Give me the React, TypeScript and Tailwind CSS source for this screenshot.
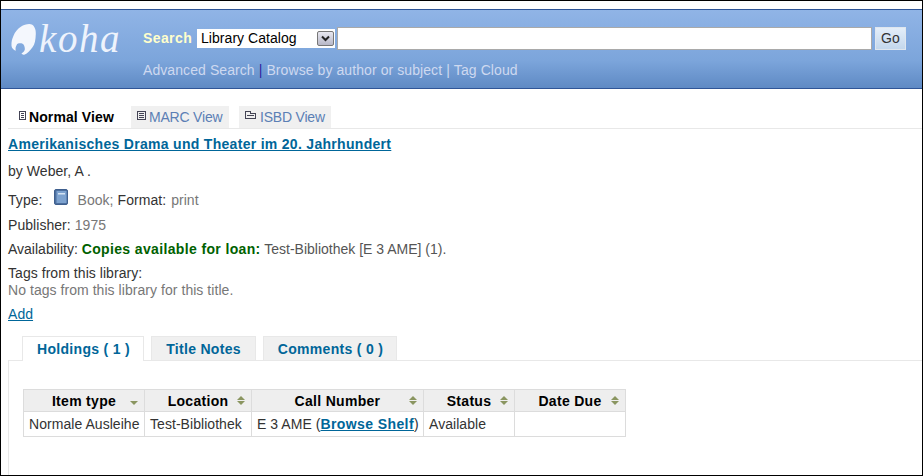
const sans = 'font-["Liberation_Sans",Arial,sans-serif]';

function SortIcon({ up = true }: { up?: boolean }) {
  return (
    <svg width="8" height="9" viewBox="0 0 8 9" className="shrink-0">
      {up && <path d="M4 0 L8 4 L0 4 Z" fill="#8a9560" />}
      <path d="M0 5 L8 5 L4 9 Z" fill="#8a9560" />
    </svg>
  );
}

function ViewIcon({ kind }: { kind: 'normal' | 'marc' | 'isbd' }) {
  return (
    <svg width="11" height="9" viewBox="0 0 11 9" className="shrink-0 mb-[8px]" fill="none" stroke="#445" strokeWidth="1" shapeRendering="crispEdges">
      {kind === 'normal' && (
        <>
          <rect x="0.5" y="0.5" width="6" height="8" />
          <path d="M2 2.5H5M2 4.5H5M2 6.5H5" />
        </>
      )}
      {kind === 'marc' && (
        <>
          <rect x="0.5" y="0.5" width="8" height="8" />
          <path d="M2 2.5H7M2 4.5H7M2 6.5H7" />
        </>
      )}
      {kind === 'isbd' && (
        <>
          <path d="M0.5 7.5V0.5H5.5V2.5H10.5V7.5Z" />
          <path d="M2 4.5H9" />
        </>
      )}
    </svg>
  );
}

function BookIcon() {
  return (
    <svg width="14" height="16" viewBox="0 0 14 16" className="shrink-0">
      <rect x="0.5" y="0.5" width="13" height="15" rx="1.5" fill="#4d6f9e" stroke="#3f5f8e" />
      <rect x="2.5" y="2" width="10" height="12" fill="#7da2cf" />
      <rect x="4" y="4" width="7" height="1.5" fill="#d5e3f3" />
    </svg>
  );
}

function Logo() {
  return (
    <div className="flex items-start w-[134px] pl-[10px] pt-[14px] shrink-0">
      <svg width="26" height="31" viewBox="0 0 25 31" className="shrink-0">
        <path
          d="M17.7 0 C22.5 0 24.6 5 24.3 10 C24 16 23.5 20 21 23.3 C18.5 27 15.5 30 12.7 30.7 C11.5 31 10.4 30.4 10 29.3 C12 28.5 13.8 26.5 13.3 24 C12.9 21 11.5 19.5 10 19.3 C7.5 19 5.3 19.5 5.3 20.7 C4 22.5 3.8 25 4.3 26.7 C2 26 0.2 24 0 21.7 C-0.2 18 0.5 15 2 11.7 C3.5 8 6 5 9.3 2.7 C12 1 15 0 17.7 0 Z"
          fill="#f4f7fd"
        />
      </svg>
      <span className='text-[#eef3fc] italic font-normal text-[39px] leading-[37px] font-["Liberation_Serif",serif] tracking-[1.6px] ml-[2px] -mt-[4px]'>
        koha
      </span>
    </div>
  );
}

const columns = [
  { label: 'Item type', width: 'w-[121px]', up: false },
  { label: 'Location', width: 'w-[107px]', up: true },
  { label: 'Call Number', width: 'w-[172px]', up: true },
  { label: 'Status', width: 'w-[91px]', up: true },
  { label: 'Date Due', width: 'w-[111px]', up: true },
];

export default function App() {
  return (
    <div className={`${sans} w-[923px] h-[476px] bg-white border border-black overflow-hidden text-[14px] text-[#333] tracking-[0.05px]`}>
      <div className="mt-2 h-20 border-y border-[#2f5597] bg-gradient-to-b from-[#90b4e6] via-[#7ca5db] via-65% to-[#5f8ac4] flex">
        <Logo />
        <div className="flex-1 pl-[8px] pt-[16px] pr-[16px]">
          <div className="flex items-center h-6">
            <span className="text-[#ffffcc] font-bold text-[14px] tracking-[0.4px] w-[54px]">Search</span>
            <div className="w-[138px] h-[19px] bg-white flex items-center justify-between pl-1 pr-[1px] text-[14px] text-black border-y border-white">
              <span>Library Catalog</span>
              <span className="w-[17px] h-[15px] bg-gradient-to-b from-[#e8e8f0] to-[#b8b8c8] border border-[#777] rounded-[2px] flex items-center justify-center">
                <svg width="9" height="7" viewBox="0 0 9 7">
                  <path d="M1 1.5 L4.5 5 L8 1.5" fill="none" stroke="#222" strokeWidth="2" />
                </svg>
              </span>
            </div>
            <div className="flex-1 h-[23px] bg-white border border-[#a9a9a9] ml-[2px]" />
            <button className="w-[31px] h-[23px] ml-[3px] border border-[#dfe6ee] bg-gradient-to-b from-[#e4eef9] to-[#c3d7ec] text-[#333] text-[14px] leading-none">
              Go
            </button>
          </div>
          <div className="mt-[10px] text-[14px] text-[#ced9f0] flex items-center h-[20px] tracking-[0.08px]">
            <span>Advanced Search</span>
            <span className="text-[#2f1f9f] px-[4px]">|</span>
            <span>Browse by author or subject</span>
            <span className="text-[#ced9f0] px-[4px]">|</span>
            <span>Tag Cloud</span>
          </div>
        </div>
      </div>

      <div className="mt-4 ml-[7px] flex items-end border-b border-[#e8e8e8] h-[24px]">
        <div className="flex items-end ml-[11px] h-[22px] w-[112px] text-black">
          <ViewIcon kind="normal" />
          <span className="font-bold tracking-[0.1px] leading-[20px] mb-[1px] -ml-[1px]">Normal View</span>
        </div>
        <div className="flex items-end h-[22px] w-[98px] bg-[#f0f0f0] pl-[6px] text-[#5b7fb5] tracking-[-0.2px]">
          <ViewIcon kind="marc" />
          <span className="leading-[20px] mb-[1px] ml-[1px]">MARC View</span>
        </div>
        <div className="flex items-end h-[22px] w-[92px] ml-[10px] bg-[#f0f0f0] pl-[6px] text-[#5b7fb5] tracking-[-0.2px]">
          <ViewIcon kind="isbd" />
          <span className="leading-[20px] mb-[1px] ml-[4px]">ISBD View</span>
        </div>
      </div>

      <div className="pl-[7px]">
        <h1 className="mt-[6px] h-[18px] leading-[18px] font-bold text-[14px] tracking-[0.3px] text-[#006699] underline">
          Amerikanisches Drama und Theater im 20. Jahrhundert
        </h1>
        <p className="mt-[9px] leading-[18px] text-[#333]">by Weber, A .</p>
        <div className="mt-[10px] flex items-center h-[20px]">
          <span>Type:</span>
          <span className="ml-[11px] mb-[6px]"><BookIcon /></span>
          <span className="ml-[10px] text-[#777]">Book;</span>
          <span className="ml-[4px]">Format:</span>
          <span className="ml-[5px] text-[#777]">print</span>
        </div>
        <p className="mt-[6px] leading-[18px]">
          Publisher: <span className="text-[#777]">1975</span>
        </p>
        <p className="mt-[6px] leading-[18px] tracking-normal">
          Availability: <span className="font-bold text-[#006100] tracking-[0.36px]">Copies available for loan:</span>{' '}
          <span className="text-[#555]">Test-Bibliothek [E 3 AME] (1).</span>
        </p>
        <p className="mt-[7px] leading-[16px]">Tags from this library:</p>
        <p className="mt-[1px] leading-[16px] text-[#777]">No tags from this library for this title.</p>
        <p className="mt-[7px] leading-[18px] text-[#006699] underline">Add</p>
      </div>

      <div className="mt-[13px] ml-[7px]">
        <div className="flex items-start h-[24px] pl-[14px] font-bold text-[14px] tracking-[0.3px] text-[#006699]">
          <div className="w-[122px] h-[25px] bg-white border border-[#e8e8e8] border-b-0 flex items-center justify-center pl-[1px] pt-[1px] relative">
            Holdings ( 1 )
          </div>
          <div className="w-[105px] h-[24px] ml-[7px] pt-[2px] bg-[#f0f0f0] border border-[#e8e8e8] border-b-0 flex items-center justify-center">
            Title Notes
          </div>
          <div className="w-[134px] h-[24px] ml-[7px] pt-[2px] pl-[1px] bg-[#f0f0f0] border border-[#e8e8e8] border-b-0 flex items-center justify-center">
            Comments ( 0 )
          </div>
        </div>
        <div className="border-t border-l border-[#e8e8e8] pt-[28px] pl-[14px] h-[115px]">
          <table className="border-collapse text-[14px] table-fixed w-[603px]">
            <thead>
              <tr>
                {columns.map((c) => (
                  <th key={c.label} className={`${c.width} h-[21px] border border-[#dcdcdc] bg-[#eeeeee] p-0 font-bold text-black tracking-[0.3px]`}>
                    <div className="flex items-center justify-center relative h-[21px]">
                      <span className="leading-[17px] pt-[2px]">{c.label}</span>
                      <span className="absolute right-[6px] top-[6px]"><SortIcon up={c.up} /></span>
                    </div>
                  </th>
                ))}
              </tr>
            </thead>
            <tbody>
              <tr className="text-[#333]">
                <td className="h-[25px] border border-[#dcdcdc] px-[5px] whitespace-nowrap">Normale Ausleihe</td>
                <td className="border border-[#dcdcdc] px-[5px] whitespace-nowrap">Test-Bibliothek</td>
                <td className="border border-[#dcdcdc] px-[5px] whitespace-nowrap">
                  E 3 AME (<span className="font-bold text-[#006699] underline tracking-[0.4px]">Browse Shelf</span>)
                </td>
                <td className="border border-[#dcdcdc] px-[5px]">Available</td>
                <td className="border border-[#dcdcdc]" />
              </tr>
            </tbody>
          </table>
        </div>
      </div>
    </div>
  );
}
